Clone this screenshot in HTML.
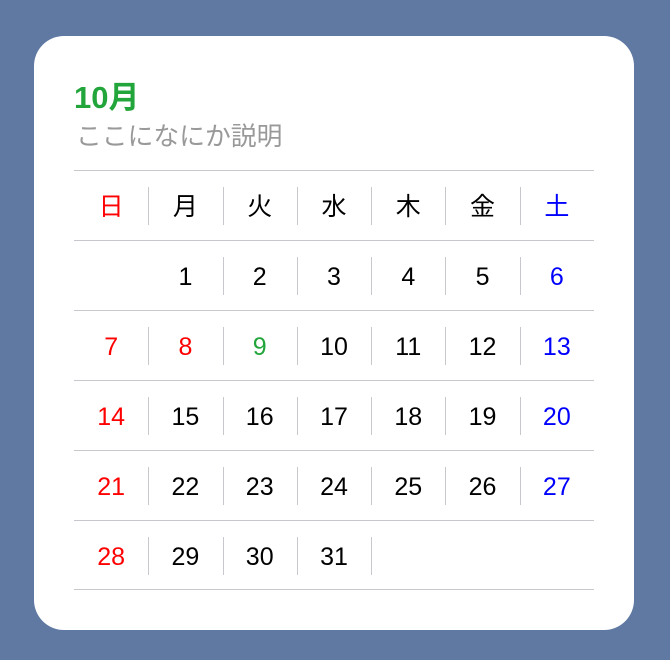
<!DOCTYPE html>
<html><head><meta charset="utf-8"><style>
body{margin:0;width:670px;height:660px;background:#5f79a3;position:relative;overflow:hidden;font-family:"Liberation Sans","Noto Sans CJK JP",sans-serif}
.card{position:absolute;left:34px;top:36px;width:600px;height:594px;background:#fff;border-radius:30px}
.t{position:absolute;left:74px;top:79px;font-size:31px;font-weight:bold;color:#22a53a;line-height:38px}
.s{position:absolute;left:76px;top:120px;font-size:25.8px;color:#999;line-height:34px}
.row{position:absolute;left:74px;width:520px;height:70px;border-top:1px solid #c8c8cc;display:flex}
.c{flex:1;position:relative;text-align:center;line-height:72px;font-size:25px;color:#000}
.c+.c::before{content:"";position:absolute;left:0;top:16px;height:38px;border-left:1px solid #c8c8cc}
.r{color:#f00}.b{color:#00f}.g{color:#22a53a}
.nb::before{display:none}
.end{position:absolute;left:74px;top:589px;width:520px;border-top:1px solid #c8c8cc}
</style></head><body>
<div class="card"></div>
<div class="t">10月</div>
<div class="s">ここになにか説明</div>
<div class="row" style="top:170px"><div class="c r">日</div><div class="c">月</div><div class="c">火</div><div class="c">水</div><div class="c">木</div><div class="c">金</div><div class="c b">土</div></div>
<div class="row" style="top:240px"><div class="c"></div><div class="c nb">1</div><div class="c">2</div><div class="c">3</div><div class="c">4</div><div class="c">5</div><div class="c b">6</div></div>
<div class="row" style="top:310px"><div class="c r">7</div><div class="c r">8</div><div class="c g">9</div><div class="c">10</div><div class="c">11</div><div class="c">12</div><div class="c b">13</div></div>
<div class="row" style="top:380px"><div class="c r">14</div><div class="c">15</div><div class="c">16</div><div class="c">17</div><div class="c">18</div><div class="c">19</div><div class="c b">20</div></div>
<div class="row" style="top:450px"><div class="c r">21</div><div class="c">22</div><div class="c">23</div><div class="c">24</div><div class="c">25</div><div class="c">26</div><div class="c b">27</div></div>
<div class="row" style="top:520px"><div class="c r">28</div><div class="c">29</div><div class="c">30</div><div class="c">31</div><div class="c"></div><div class="c nb"></div><div class="c nb"></div></div>
<div class="end"></div>
</body></html>
